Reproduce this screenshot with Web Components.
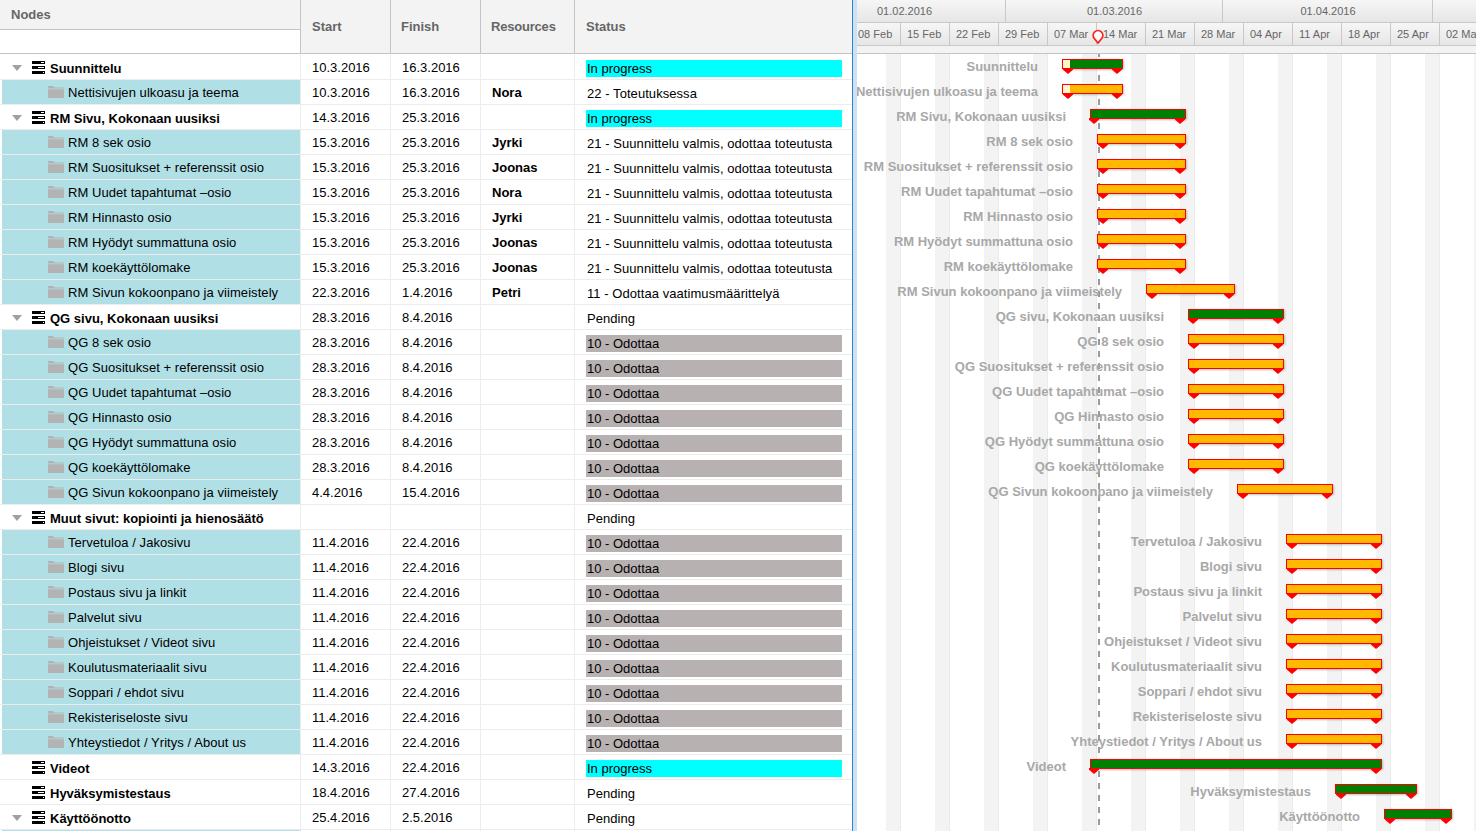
<!DOCTYPE html>
<html>
<head>
<meta charset="utf-8">
<title>Gantt</title>
<style>
  html, body { margin: 0; height: 100%; overflow: hidden; background: #fff; }
  body { font: 13px "Liberation Sans", Arial, sans-serif; color: #000; }
</style>
</head>
<body>
<gantt-app></gantt-app>
<script>
const G = 'group', F = 'folder';
const WAIT = '10 - Odottaa', PROG = 'In progress', DESIGN = '21 - Suunnittelu valmis, odottaa toteutusta';

// type, name, start, finish, resource, status, bar left, bar right, collapsed arrow
const ROWS = [
    [G, 'Suunnittelu', '10.3.2016', '16.3.2016', '', PROG, 1062, 1123, true],
    [F, 'Nettisivujen ulkoasu ja teema', '10.3.2016', '16.3.2016', 'Nora', '22 - Toteutuksessa', 1062, 1123],
    [G, 'RM Sivu, Kokonaan uusiksi', '14.3.2016', '25.3.2016', '', PROG, 1090, 1186, true],
    [F, 'RM 8 sek osio', '15.3.2016', '25.3.2016', 'Jyrki', DESIGN, 1097, 1186],
    [F, 'RM Suositukset + referenssit osio', '15.3.2016', '25.3.2016', 'Joonas', DESIGN, 1097, 1186],
    [F, 'RM Uudet tapahtumat –osio', '15.3.2016', '25.3.2016', 'Nora', DESIGN, 1097, 1186],
    [F, 'RM Hinnasto osio', '15.3.2016', '25.3.2016', 'Jyrki', DESIGN, 1097, 1186],
    [F, 'RM Hyödyt summattuna osio', '15.3.2016', '25.3.2016', 'Joonas', DESIGN, 1097, 1186],
    [F, 'RM koekäyttölomake', '15.3.2016', '25.3.2016', 'Joonas', DESIGN, 1097, 1186],
    [F, 'RM Sivun kokoonpano ja viimeistely', '22.3.2016', '1.4.2016', 'Petri', '11 - Odottaa vaatimusmäärittelyä', 1146, 1235],
    [G, 'QG sivu, Kokonaan uusiksi', '28.3.2016', '8.4.2016', '', 'Pending', 1188, 1284, true],
    [F, 'QG 8 sek osio', '28.3.2016', '8.4.2016', '', WAIT, 1188, 1284],
    [F, 'QG Suositukset + referenssit osio', '28.3.2016', '8.4.2016', '', WAIT, 1188, 1284],
    [F, 'QG Uudet tapahtumat –osio', '28.3.2016', '8.4.2016', '', WAIT, 1188, 1284],
    [F, 'QG Hinnasto osio', '28.3.2016', '8.4.2016', '', WAIT, 1188, 1284],
    [F, 'QG Hyödyt summattuna osio', '28.3.2016', '8.4.2016', '', WAIT, 1188, 1284],
    [F, 'QG koekäyttölomake', '28.3.2016', '8.4.2016', '', WAIT, 1188, 1284],
    [F, 'QG Sivun kokoonpano ja viimeistely', '4.4.2016', '15.4.2016', '', WAIT, 1237, 1333],
    [G, 'Muut sivut: kopiointi ja hienosäätö', '', '', '', 'Pending', 0, 0, true],
    [F, 'Tervetuloa / Jakosivu', '11.4.2016', '22.4.2016', '', WAIT, 1286, 1382],
    [F, 'Blogi sivu', '11.4.2016', '22.4.2016', '', WAIT, 1286, 1382],
    [F, 'Postaus sivu ja linkit', '11.4.2016', '22.4.2016', '', WAIT, 1286, 1382],
    [F, 'Palvelut sivu', '11.4.2016', '22.4.2016', '', WAIT, 1286, 1382],
    [F, 'Ohjeistukset / Videot sivu', '11.4.2016', '22.4.2016', '', WAIT, 1286, 1382],
    [F, 'Koulutusmateriaalit sivu', '11.4.2016', '22.4.2016', '', WAIT, 1286, 1382],
    [F, 'Soppari / ehdot sivu', '11.4.2016', '22.4.2016', '', WAIT, 1286, 1382],
    [F, 'Rekisteriseloste sivu', '11.4.2016', '22.4.2016', '', WAIT, 1286, 1382],
    [F, 'Yhteystiedot / Yritys / About us', '11.4.2016', '22.4.2016', '', WAIT, 1286, 1382],
    [G, 'Videot', '14.3.2016', '22.4.2016', '', PROG, 1090, 1382],
    [G, 'Hyväksymistestaus', '18.4.2016', '27.4.2016', '', 'Pending', 1335, 1417],
    [G, 'Käyttöönotto', '25.4.2016', '2.5.2016', '', 'Pending', 1384, 1452, true],
    [F, '', '', '', '', '', 0, 0]
];

const WEEKS = ['08 Feb', '15 Feb', '22 Feb', '29 Feb', '07 Mar', '14 Mar', '21 Mar', '28 Mar', '04 Apr', '11 Apr', '18 Apr', '25 Apr', '02 May'];
const MONTHS = [['01.02.2016', 149, 0, 53], ['01.03.2016', 217, 1, 0], ['01.04.2016', 210, 1, 0], ['', 44, 0, 0]];

const GROUP_ICON = `<svg width="14" height="13" viewBox="0 0 14 13"><path fill="#000" d="M0 0h13v3h-13zM0 5h13v3h-13zM0 10h13v3h-13z"/><path fill="#fff" d="M9 1h3v1h-3zM6 6h6v1h-6zM11 11h1v1h-1z"/></svg>`;
const FOLDER_ICON = `<svg width="16" height="12" viewBox="0 0 16 12"><path fill="#b3b3b3" d="M0 0h5l1.500 1.500h9.500v1h-16zM0 3.200h16v8.800h-16z"/></svg>`;


class GridHeader extends HTMLElement {
    constructor() {
        super();
        this.attachShadow({ mode: 'open' });
        this.shadowRoot.innerHTML = `
            <style>
                :host {
                    display: grid;
                    grid-template-columns: 301px 90px 90px 94px 1fr;
                    height: 54px;
                    box-sizing: border-box;
                    border-bottom: 1px solid #c4c4c4;
                    background: #f3f3f3;
                    color: #666;
                    font-weight: bold;
                }
                .col {
                    display: flex;
                    align-items: center;
                    padding-left: 11px;
                    border-right: 1px solid #c4c4c4;
                    padding-bottom: 1px;
                }
                .col:last-child { border-right: none; }
                .finish { padding-left: 10px; }
                .res { padding-left: 10px; letter-spacing: -.2px; }
                .nodes { display: flex; flex-direction: column; border-right: 1px solid #c4c4c4; }
                .nodes span {
                    height: 30px;
                    flex: none;
                    box-sizing: border-box;
                    padding: 7px 0 0 11px;
                    border-bottom: 1px solid #c4c4c4;
                }
                .nodes i { flex: 1; background: #fff; }
            </style>
            <div class="nodes"><span>Nodes</span><i></i></div>
            <div class="col">Start</div>
            <div class="col finish">Finish</div>
            <div class="col res">Resources</div>
            <div class="col">Status</div>
        `;
    }
}
customElements.define('grid-header', GridHeader);


class GridRow extends HTMLElement {
    constructor() {
        super();
        this.attachShadow({ mode: 'open' });
    }

    set data(r) {
        const [type, name, start, finish, resource, status, , , arrow] = r;
        const cls = status === PROG ? 'prog' : status === WAIT ? 'wait' : 'plain';
        this.shadowRoot.innerHTML = `
            <style>
                :host {
                    display: grid;
                    grid-template-columns: 301px 90px 90px 94px 1fr;
                    height: 25px;
                    box-sizing: border-box;
                    border-bottom: 1px solid #ececec;
                }
                .cell {
                    display: flex;
                    align-items: center;
                    padding-left: 11px;
                    padding-top: 1px;
                    border-right: 1px solid #ececec;
                    white-space: nowrap;
                }
                .cell.res { font-weight: bold; padding-top: 0; padding-bottom: 0; }
                .node { padding-left: 0; margin-left: 2px; }
                .folder { background: #b0dfe6; letter-spacing: .06px; }
                .group { font-weight: bold; padding-top: 3px; }
                .arrow {
                    width: 0; height: 0; margin: -1px 0 0 10px;
                    border: 5px solid transparent;
                    border-top: 6px solid #a0a0a0;
                    border-bottom: none;
                }
                .noarrow { width: 10px; margin-left: 10px; }
                .group svg { margin: -3px 4px 0 10px; }
                .folder svg { margin: -2px 4px 0 46px; }
                .status { padding-left: 11px; padding-right: 10px; border-right: none; }
                .status span { flex: 1; padding-left: 1px; height: 17px; line-height: 17px; margin-top: 1px; }
                .status .plain { letter-spacing: .06px; }
                .prog { background: #00ffff; }
                .wait { background: #b8b1b1; }
            </style>
            <div class="cell node ${type}">
                ${type === G ? (arrow ? '<i class="arrow"></i>' : '<i class="noarrow"></i>') + GROUP_ICON : FOLDER_ICON}
                <span>${name}</span>
            </div>
            <div class="cell">${start}</div>
            <div class="cell">${finish}</div>
            <div class="cell res">${resource}</div>
            <div class="cell status"><span class="${cls}">${status}</span></div>
        `;
        if (!name) this.shadowRoot.querySelector('svg').style.display = 'none';
    }
}
customElements.define('grid-row', GridRow);


class GanttGrid extends HTMLElement {
    constructor() {
        super();
        this.attachShadow({ mode: 'open' });
        this.shadowRoot.innerHTML = `
            <style>
                :host { display: block; width: 852px; flex: none; overflow: hidden; }
                .spacer { height: 1px; }
            </style>
            <grid-header></grid-header>
            <div class="spacer"></div>
            <div class="rows"></div>
        `;
        const rows = this.shadowRoot.querySelector('.rows');
        ROWS.forEach(r => {
            const row = document.createElement('grid-row');
            row.data = r;
            rows.appendChild(row);
        });
    }
}
customElements.define('gantt-grid', GanttGrid);


class TimeHeader extends HTMLElement {
    constructor() {
        super();
        this.attachShadow({ mode: 'open' });
        this.shadowRoot.innerHTML = `
            <style>
                :host {
                    display: block;
                    height: 54px;
                    box-sizing: border-box;
                    border-bottom: 1px solid #c4c4c4;
                    background: #f3f3f3;
                    color: #666;
                    font-size: 11px;
                    white-space: nowrap;
                    overflow: hidden;
                }
                .line {
                    display: flex;
                    height: 22px;
                    border-bottom: 1px solid #c8c8c8;
                    background: linear-gradient(#f6f6f6, #e6e6e6);
                }
                .line div {
                    flex: none;
                    box-sizing: border-box;
                    border-right: 1px solid #c8c8c8;
                    line-height: 23px;
                }
                .months div { text-align: center; }
                .weeks div { padding-left: 6px; width: 49px; line-height: 22px; }
                .weeks div:first-child { width: 44px; padding-left: 1px; }
            </style>
            <div class="line months">
                ${MONTHS.map(([t, w, pl, pr]) => `<div style="width:${w}px;padding:0 ${pr}px 0 ${pl}px">${t}</div>`).join('')}
            </div>
            <div class="line weeks">
                ${WEEKS.map(t => `<div>${t}</div>`).join('')}
            </div>
        `;
    }
}
customElements.define('time-header', TimeHeader);


class GanttBar extends HTMLElement {
    constructor() {
        super();
        this.attachShadow({ mode: 'open' });
    }

    set data(r) {
        const [type, name, , , , , l] = r;
        const green = type === G;
        const done = r[2] === '10.3.2016';
        const markLeft = l === 1090 ? -2 : l === 1188 && green ? -1 : 0;
        this.shadowRoot.innerHTML = `
            <style>
                :host {
                    position: absolute;
                    display: block;
                    height: 10px;
                    box-sizing: border-box;
                    border: 1px solid #ff0000;
                    background: ${green ? '#008000' : '#ffb900'};
                    box-shadow: 1px 1px 2px rgba(0, 0, 0, .25);
                }
                .done { position: absolute; left: 0; top: 0; bottom: 0; width: 7px; background: #fff8cf; }
                .mark {
                    position: absolute;
                    bottom: -6px;
                    width: 10px;
                    height: 6px;
                    background: #ff0000;
                    clip-path: polygon(0 0, 100% 0, 100% 30%, 50% 100%, 0 30%);
                }
                .a { left: ${markLeft}px; }
                .b { right: 0; }
                .label {
                    position: absolute;
                    right: calc(100% + 25px);
                    top: -1px;
                    color: #a8a8a8;
                    font-weight: bold;
                    white-space: nowrap;
                }
            </style>
            ${done ? '<div class="done"></div>' : ''}
            <i class="mark a"></i><i class="mark b"></i>
            <span class="label">${name}</span>
        `;
    }
}
customElements.define('gantt-bar', GanttBar);


class TodayMark extends HTMLElement {
    constructor() {
        super();
        this.attachShadow({ mode: 'open' });
        this.shadowRoot.innerHTML = `
            <style>
                :host { position: absolute; left: 235px; top: 0; bottom: 0; width: 12px; display: block; pointer-events: none; }
                svg { position: absolute; left: 0; top: 29px; }
                .dash {
                    position: absolute; left: 6px; top: 54px; bottom: 0; width: 2px;
                    background: linear-gradient(#999 0 6px, transparent 6px 12px) 0 -3px / 2px 12px repeat-y;
                }
            </style>
            <div class="dash"></div>
            <svg width="12" height="15" viewBox="0 0 12 15">
                <path d="M6 14 L2.300 9.500 A4.800 4.800 0 1 1 9.700 9.500 Z" fill="#fff" stroke="#ff2020" stroke-width="1.800"/>
            </svg>
        `;
    }
}
customElements.define('today-mark', TodayMark);


class GanttChart extends HTMLElement {
    constructor() {
        super();
        this.attachShadow({ mode: 'open' });
        this.shadowRoot.innerHTML = `
            <style>
                :host {
                    display: block;
                    position: relative;
                    flex: 1;
                    min-width: 0;
                    overflow: hidden;
                    font-size: 13px;
                }
                .canvas {
                    position: absolute;
                    left: 0; right: 0; top: 54px; bottom: 0;
                    /* weekends: last 15px of each 49px week, weeks start 5px left of the pane */
                    background: repeating-linear-gradient(90deg, #fff 0 29px, #f3f3f3 29px 43px, #ebebeb 43px 44px, #fff 44px 49px);
                }
            </style>
            <time-header></time-header>
            <div class="canvas"></div>
            <today-mark></today-mark>
        `;
        const root = this.shadowRoot;
        ROWS.forEach((r, i) => {
            if (!r[6]) return;
            const bar = document.createElement('gantt-bar');
            bar.style.left = (r[6] - 857) + 'px';
            bar.style.width = (r[7] - r[6]) + 'px';
            bar.style.top = (59 + 25 * i) + 'px';
            bar.data = r;
            root.appendChild(bar);
        });
    }
}
customElements.define('gantt-chart', GanttChart);


class GanttApp extends HTMLElement {
    constructor() {
        super();
        this.attachShadow({ mode: 'open' });
        this.shadowRoot.innerHTML = `
            <style>
                :host { display: flex; height: 831px; overflow: hidden; }
                .split { flex: none; width: 5px; box-sizing: border-box; border-left: 1px solid #2f84d0; background: #cfe0f5; }
            </style>
            <gantt-grid></gantt-grid>
            <div class="split"></div>
            <gantt-chart></gantt-chart>
        `;
    }
}
customElements.define('gantt-app', GanttApp);
</script>
</body>
</html>
